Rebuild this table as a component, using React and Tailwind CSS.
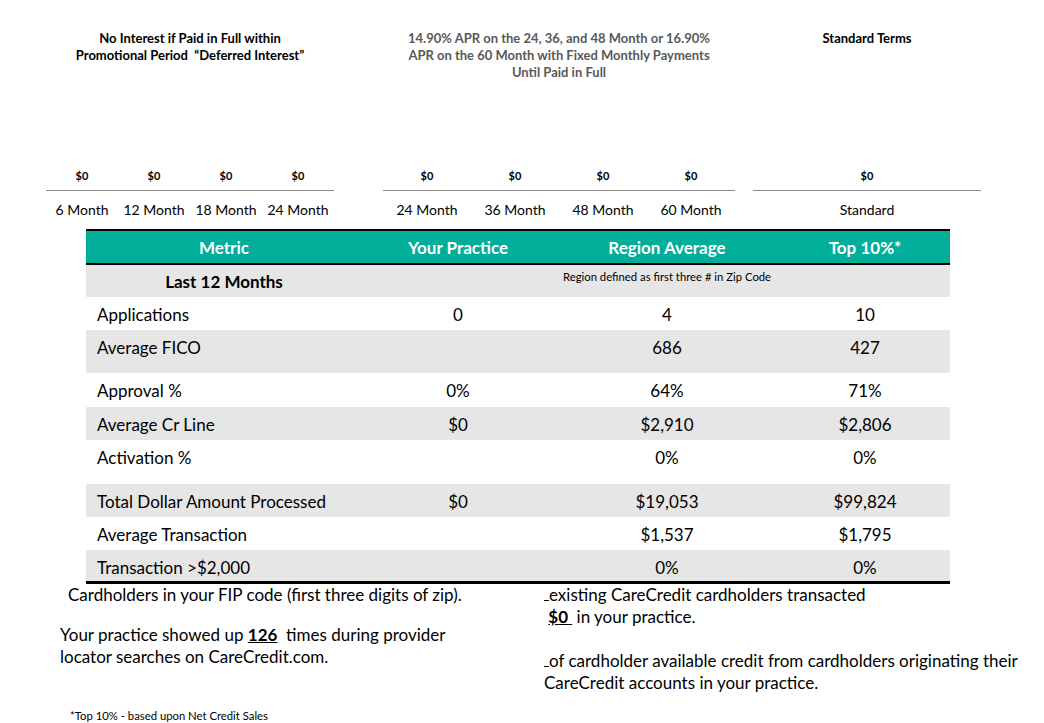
const deferred = ["6 Month", "12 Month", "18 Month", "24 Month"];
const fixed = ["24 Month", "36 Month", "48 Month", "60 Month"];

const rows = [
  { metric: "Applications", yours: "0", region: "4", top: "10", h: "h-[33px]", gray: false },
  { metric: "Average FICO", yours: "", region: "686", top: "427", h: "h-[43px]", gray: true },
  { metric: "Approval %", yours: "0%", region: "64%", top: "71%", h: "h-[34px]", gray: false },
  { metric: "Average Cr Line", yours: "$0", region: "$2,910", top: "$2,806", h: "h-[33px]", gray: true },
  { metric: "Activation %", yours: "", region: "0%", top: "0%", h: "h-[44px]", gray: false },
  { metric: "Total Dollar Amount Processed", yours: "$0", region: "$19,053", top: "$99,824", h: "h-[33px]", gray: true },
  { metric: "Average Transaction", yours: "", region: "$1,537", top: "$1,795", h: "h-[33px]", gray: false },
  { metric: "Transaction >$2,000", yours: "", region: "0%", top: "0%", h: "h-[31px]", gray: true },
];

const TermGroup = ({ title, terms, width, colWidth, titleClass }) => (
  <div className={`flex flex-col ${width}`}>
    <div className={`h-[168px] pt-[30px] text-center text-[13px] leading-[17px] font-bold whitespace-nowrap ${titleClass}`}>
      {title}
    </div>
    <div className="flex h-[22px]">
      {terms.map((t, i) => (
        <div key={i} className={`${colWidth} text-center text-[11px] leading-[16px] font-bold`}>
          $0
        </div>
      ))}
    </div>
    <div className="flex border-t border-[#8c8c8c] pt-[9px] pb-[9px]">
      {terms.map((t) => (
        <div key={t} className={`${colWidth} text-center text-[14px] leading-[20px] whitespace-nowrap`}>
          {t}
        </div>
      ))}
    </div>
  </div>
);

const Blank = () => (
  <span className="inline-block w-[5px] h-[16px] border-b border-black align-baseline"></span>
);

export default function App() {
  return (
    <div
      className="w-[1044px] h-[723px] bg-white text-black overflow-hidden"
      style={{ fontFamily: "Lato, 'Open Sans', sans-serif" }}
    >
      <div className="flex">
        <div className="ml-[46px]">
          <TermGroup
            title={<>No Interest if Paid in Full within<br />Promotional Period &nbsp;“Deferred Interest”</>}
            terms={deferred}
            width="w-[288px]"
            colWidth="w-[72px]"
            titleClass="text-black"
          />
        </div>
        <div className="ml-[49px]">
          <TermGroup
            title={<>14.90% APR on the 24, 36, and 48 Month or 16.90%<br />APR on the 60 Month with Fixed Monthly Payments<br />Until Paid in Full</>}
            terms={fixed}
            width="w-[352px]"
            colWidth="w-[88px]"
            titleClass="text-[#595959]"
          />
        </div>
        <div className="ml-[18px]">
          <TermGroup
            title="Standard Terms"
            terms={["Standard"]}
            width="w-[228px]"
            colWidth="w-[228px]"
            titleClass="text-black"
          />
        </div>
      </div>

      <div className="ml-[86px] w-[864px] text-[17px]">
        <div className="grid grid-cols-[276px_192px_226px_170px] border-t-2 border-b-2 border-black bg-[#00ae9a] text-white font-bold h-[36px] leading-[33px] text-center">
          <div>Metric</div>
          <div>Your Practice</div>
          <div>Region Average</div>
          <div>Top 10%*</div>
        </div>
        <div className="grid grid-cols-[276px_192px_226px_170px] bg-[#e7e6e6] h-[32px]">
          <div className="text-center font-bold leading-[33px]">Last 12 Months</div>
          <div></div>
          <div className="col-span-2 pl-[9px] pt-[3px] text-[11.3px] leading-[18px]">
            Region defined as first three # in Zip Code
          </div>
        </div>
        {rows.map((r) => (
          <div
            key={r.metric}
            className={`grid grid-cols-[276px_192px_226px_170px] pt-[1px] leading-[34px] ${r.h} ${r.gray ? "bg-[#e7e6e6]" : "bg-white"}`}
          >
            <div className="pl-[11px] whitespace-nowrap">{r.metric}</div>
            <div className="text-center">{r.yours}</div>
            <div className="text-center">{r.region}</div>
            <div className="text-center">{r.top}</div>
          </div>
        ))}
        <div className="border-t-[3px] border-black"></div>
      </div>

      <div className="flex text-[17px] leading-[22px]">
        <div className="ml-[60px] w-[484px]">
          <p className="pl-[8px]">Cardholders in your FIP code (first three digits of zip).</p>
          <p className="mt-[18px]">
            Your practice showed up <span className="font-bold underline">126</span>&nbsp; times during provider
            <br />
            locator searches on CareCredit.com.
          </p>
          <p className="mt-[41px] pl-[10px] text-[11.3px] leading-[14px]">*Top 10% - based upon Net Credit Sales</p>
        </div>
        <div className="whitespace-nowrap">
          <p>
            <Blank />
            existing CareCredit cardholders transacted
            <br />
            &nbsp;<span className="font-bold underline">$0&nbsp;</span> in your practice.
          </p>
          <p className="mt-[22px]">
            <Blank />
            of cardholder available credit from cardholders originating their
            <br />
            CareCredit accounts in your practice.
          </p>
        </div>
      </div>
    </div>
  );
}
